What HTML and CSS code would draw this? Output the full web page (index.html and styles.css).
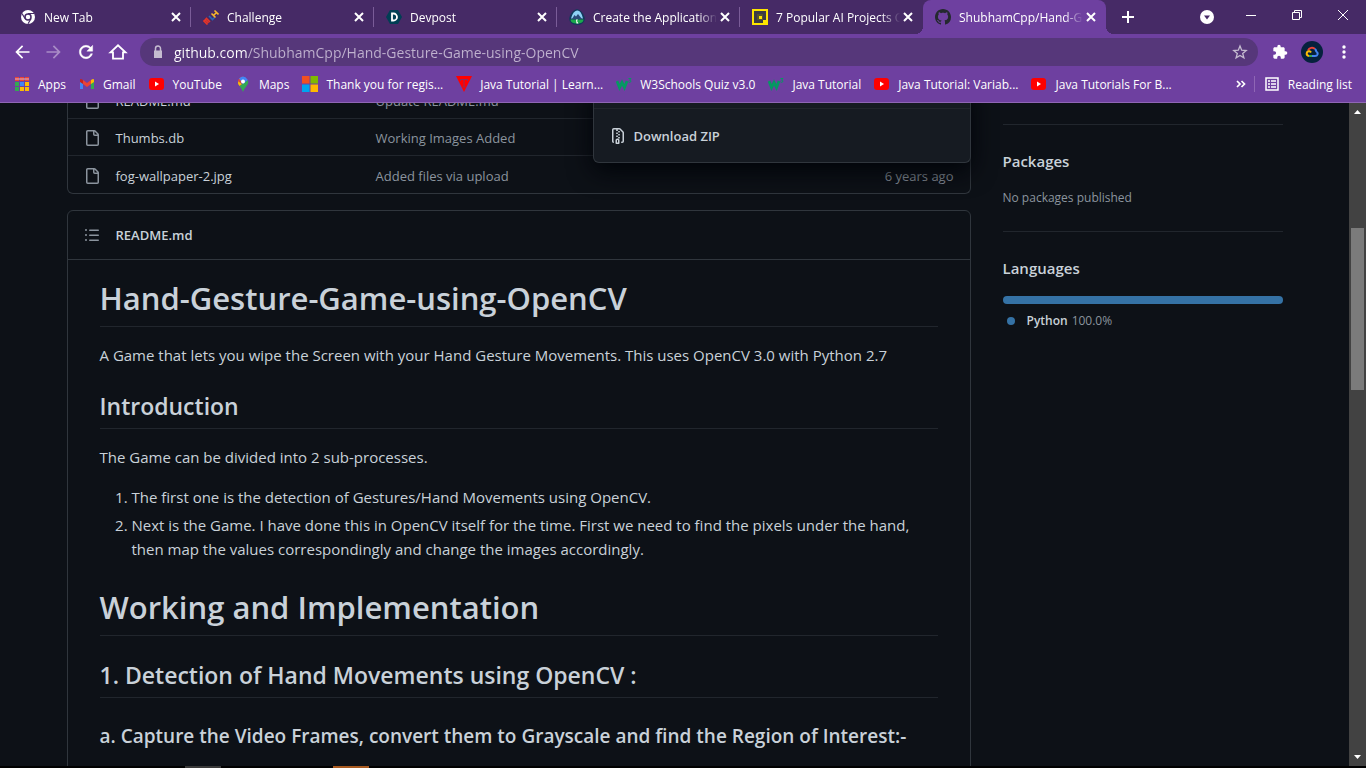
FILE: index.html
```html
<!DOCTYPE html>
<html lang="en">
<head>
  <meta charset="UTF-8">
  <meta name="viewport" content="width=device-width, initial-scale=1.0">
  <title>ShubhamCpp/Hand-Gesture-Game-using-OpenCV</title>
  <link rel="stylesheet" href="styles.css">
</head>
<body>
  <svg class="defs" width="0" height="0">
    <symbol id="close" viewBox="0 0 16 16"><path d="M4 4l8 8M12 4l-8 8" stroke="#fff" stroke-width="2" fill="none"/></symbol>
    <symbol id="youtube" viewBox="0 0 16 16"><rect x="0" y="2" width="15" height="12" rx="3" fill="#f00"/><path d="M6 5.500v5l4-2.500z" fill="#fff"/></symbol>
    <symbol id="w3" viewBox="0 0 16 16"><path d="M1 5l2.500 6.500L6 6.500l2.500 5L11 5" stroke="#059862" stroke-width="2.800" fill="none"/><path d="M12.500 2.500h2.500l-1.500 1.700q2 .3 1.300 1.600-.8.900-2.300.2" stroke="#059862" fill="none"/></symbol>
    <symbol id="file" viewBox="0 0 16 16"><path fill="currentColor" d="M3.750 1.500a.25.25 0 00-.25.25v12.500c0 .138.112.25.25.25h9.500a.25.25 0 00.25-.25V6h-2.750A1.750 1.750 0 019 4.250V1.500H3.750zm6.750.062V4.250c0 .138.112.25.25.25h2.688a.252.252 0 00-.011-.013l-2.914-2.914a.272.272 0 00-.013-.011zM2 1.750C2 .784 2.784 0 3.750 0h6.586c.464 0 .909.184 1.237.513l2.914 2.914c.329.328.513.773.513 1.237v9.586A1.750 1.750 0 0113.250 16h-9.500A1.750 1.750 0 012 14.250V1.750z"/></symbol>
  </svg>

  <div class="browser">
    <header>
      <div class="tab-strip">
        <div class="tab">
          <svg class="icon" viewBox="0 0 16 16"><circle cx="8" cy="8" r="7" fill="#fff"/><circle cx="8" cy="8" r="3" fill="none" stroke="#462a66" stroke-width="1.500"/><path d="M8 4.500h6M5 9.500L2 4.500M11 9.800l-3 5" stroke="#462a66" stroke-width="1.200"/></svg>
          <span class="tab-title">New Tab</span>
          <button class="tab-close" aria-label="Close tab"><svg class="icon"><use href="#close"/></svg></button>
        </div>
        <div class="tab">
          <svg class="icon" viewBox="0 0 16 16"><g fill="none" stroke-width="1.600"><path d="M4.500 15.500L1 12l1.200-1.200 2 2M2.200 10.800l1.300-1.300 3.500 3.500M3.500 12l2 2" stroke="#e73427"/><path d="M6 7l3.500 3.500L11.500 8.500" stroke="#2667b5"/><path d="M8.500 4.500l4 4M11.500 1.500l4 4M10.500 6.500l3-3" stroke="#f8b92a"/></g></svg>
          <span class="tab-title">Challenge</span>
          <button class="tab-close" aria-label="Close tab"><svg class="icon"><use href="#close"/></svg></button>
        </div>
        <div class="tab">
          <svg class="icon" viewBox="0 0 16 16"><path d="M4 1h8l4 7-4 7H4L0 8z" fill="#003e54"/><path d="M6 4.500h1.500a3.500 3.500 0 010 7H6z" fill="none" stroke="#fff" stroke-width="1.800"/></svg>
          <span class="tab-title">Devpost</span>
          <button class="tab-close" aria-label="Close tab"><svg class="icon"><use href="#close"/></svg></button>
        </div>
        <div class="tab">
          <svg class="icon" viewBox="0 0 16 16"><path d="M8 0q5 1 7.500 8 1 4-1.500 6-2 2-6 2t-6-2q-2.500-2-1.500-6Q3 1 8 0z" fill="#12395b"/><path d="M2 9.500Q4 2 8 1.500T14 9.500z" fill="#8ed1f5"/><path d="M3 10l2.500-4 1.500 1.500L9 5l4 5z" fill="#2b4a78"/><path d="M1.500 10.500h13q0 4-6.500 4t-6.500-4z" fill="#1ba94c"/><path d="M7 10.500h2l-1 1.500 1.500 2.500H7.500z" fill="#fff"/></svg>
          <span class="tab-title">Create the Application</span>
          <button class="tab-close" aria-label="Close tab"><svg class="icon"><use href="#close"/></svg></button>
        </div>
        <div class="tab">
          <svg class="icon" viewBox="0 0 16 16"><path d="M0 0h16v16H0z" fill="#fde400"/><path d="M2 2h12v9h-3v3H2z" fill="#3b3b45"/><path d="M5 5h6v6H5z" fill="#57532c"/><path d="M7 7h3v3H7z" fill="#fde400"/></svg>
          <span class="tab-title">7 Popular AI Projects C</span>
          <button class="tab-close" aria-label="Close tab"><svg class="icon"><use href="#close"/></svg></button>
        </div>
        <div class="tab active">
          <svg class="icon" viewBox="0 0 16 16"><path fill="#24292e" d="M8 0C3.580 0 0 3.580 0 8c0 3.540 2.290 6.530 5.470 7.590.4.07.55-.17.55-.38 0-.19-.01-.82-.01-1.490-2.010.37-2.530-.49-2.690-.94-.09-.23-.48-.94-.82-1.130-.28-.15-.68-.52-.01-.53.63-.01 1.080.58 1.230.82.72 1.210 1.870.87 2.330.66.07-.52.28-.87.51-1.070-1.780-.2-3.640-.89-3.640-3.950 0-.87.31-1.590.82-2.150-.08-.2-.36-1.020.08-2.120 0 0 .67-.21 2.200.82.64-.18 1.320-.27 2-.27s1.360.09 2 .27c1.530-1.040 2.200-.82 2.200-.82.44 1.100.16 1.920.08 2.120.51.56.82 1.270.82 2.150 0 3.070-1.870 3.750-3.650 3.950.29.25.54.73.54 1.480 0 1.070-.01 1.930-.01 2.200 0 .21.15.46.55.38A8.010 8.010 0 0016 8c0-4.420-3.580-8-8-8z"/></svg>
          <span class="tab-title">ShubhamCpp/Hand-G</span>
          <button class="tab-close" aria-label="Close tab"><svg class="icon"><use href="#close"/></svg></button>
        </div>
        <button class="new-tab" aria-label="New tab"><svg class="icon" viewBox="0 0 16 16"><path d="M8 2v12M2 8h12" stroke="#fff" stroke-width="2"/></svg></button>
        <button class="tab-search" aria-label="Search tabs"><svg class="icon" viewBox="0 0 16 16"><circle cx="8" cy="8" r="7" fill="#fff"/><path d="M5 6.500h6l-3 4z" fill="#462a66"/></svg></button>
        <div class="window-buttons">
          <button aria-label="Minimize"><svg class="icon" viewBox="0 0 16 16"><path d="M3 8.500h10" stroke="#fff"/></svg></button>
          <button aria-label="Restore"><svg class="icon" viewBox="0 0 16 16"><path d="M3.500 5.500h7v7h-7zM5.500 5.500v-2h7v7h-2" fill="none" stroke="#fff"/></svg></button>
          <button aria-label="Close"><svg class="icon" viewBox="0 0 16 16"><path d="M3 3l10 10M13 3L3 13" stroke="#fff"/></svg></button>
        </div>
      </div>

      <div class="toolbar">
        <button aria-label="Back"><svg class="nav-icon" viewBox="0 0 24 24"><path fill="#fff" d="M21 11H7.830l5.590-5.590L12 4l-8 8 8 8 1.410-1.410L7.830 13H21z"/></svg></button>
        <button aria-label="Forward"><svg class="nav-icon" viewBox="0 0 24 24"><path fill="#a98cc6" d="M3 11h13.170l-5.590-5.590L12 4l8 8-8 8-1.410-1.410L16.170 13H3z"/></svg></button>
        <button aria-label="Reload"><svg class="nav-icon" viewBox="0 0 24 24"><path fill="#fff" stroke="#fff" stroke-width=".5" d="M17.650 6.350C16.200 4.900 14.210 4 12 4c-4.420 0-7.990 3.580-7.990 8s3.570 8 7.990 8c3.730 0 6.840-2.550 7.730-6h-2.080c-.82 2.330-3.040 4-5.650 4-3.310 0-6-2.690-6-6s2.690-6 6-6c1.660 0 3.140.69 4.220 1.780L13 11h7V4l-2.350 2.350z"/></svg></button>
        <button aria-label="Home"><svg class="nav-icon" viewBox="0 0 24 24"><path fill="none" stroke="#fff" stroke-width="2.200" d="M3 12.500L12 4l9 8.500h-3V20H6v-7.500z"/></svg></button>
        <div class="omnibox">
          <svg class="icon" viewBox="0 0 16 16"><path d="M4 6.500h8V14H4z" fill="#c5bcd0"/><path d="M5.500 7V4.500a2.500 2.500 0 015 0V7" fill="none" stroke="#c5bcd0" stroke-width="1.500"/></svg>
          <input type="text" aria-label="Address" value="github.com/ShubhamCpp/Hand-Gesture-Game-using-OpenCV">
          <button class="star" aria-label="Bookmark this page"><svg class="icon" viewBox="0 0 16 16"><path d="M8 2l1.700 4.200 4.500.3-3.500 2.900 1.200 4.400L8 11.400l-3.900 2.400 1.200-4.400-3.500-2.900 4.500-.3z" fill="none" stroke="#c5bcd0" stroke-width="1.300"/></svg></button>
        </div>
        <button aria-label="Extensions"><svg class="puzzle" viewBox="0 0 24 24"><path fill="#fff" d="M20.500 11H19V7c0-1.100-.9-2-2-2h-4V3.500a2.500 2.500 0 00-5 0V5H4c-1.100 0-1.990.9-1.990 2v3.800H3.500a2.700 2.700 0 010 5.400H2V20c0 1.100.9 2 2 2h3.800v-1.500a2.700 2.700 0 015.400 0V22H17c1.100 0 2-.9 2-2v-4h1.500a2.500 2.500 0 000-5z"/></svg></button>
        <button aria-label="Profile"><svg class="avatar" viewBox="0 0 22 22"><circle cx="11" cy="11" r="11" fill="#06213d"/><g fill="none" stroke-width="2"><path d="M7 9.500A4.300 4.300 0 0114 8" stroke="#ea4335"/><path d="M14 8q1.200 1.200 1.300 2.500 1.800 1 1.200 3-.5 1.500-2.500 1.500h-3" stroke="#4285f4"/><path d="M11 15H8" stroke="#34a853"/><path d="M8 15q-2.500-.5-2.300-2.500Q6 10 8.500 10.200q1 .3 1.500 1.300" stroke="#fbbc04"/></g></svg></button>
        <button aria-label="Menu"><svg class="icon" viewBox="0 0 16 16"><g fill="#fff"><circle cx="8" cy="3" r="1.700"/><circle cx="8" cy="8" r="1.700"/><circle cx="8" cy="13" r="1.700"/></g></svg></button>
      </div>

      <nav class="bookmarks">
        <a href="#"><svg class="icon" viewBox="0 0 16 16"><path d="M1 1h4v4H1zM6 1h4v4H6zM11 1h4v4h-4z" fill="#ea4335"/><path d="M1 6h4v4H1z" fill="#34a853"/><path d="M6 6h4v4H6z" fill="#4285f4"/><path d="M11 6h4v4h-4zM6 11h4v4H6zM11 11h4v4h-4z" fill="#fbbc04"/><path d="M1 11h4v4H1z" fill="#34a853"/><path d="M1 3h14" stroke="#d9b7cd"/></svg><span>Apps</span></a>
        <a href="#"><svg class="icon" viewBox="0 0 16 16"><path d="M1 4v9h3V7z" fill="#4285f4"/><path d="M12 7v6h3V4z" fill="#34a853"/><path d="M4 4l4 3 4-3v4l-4 3-4-3z" fill="#ea4335"/><path d="M1 4q0-2 3 0v4L1 6z" fill="#c5221f"/><path d="M15 4q0-2-3 0v4l3-2z" fill="#fbbc04"/></svg><span>Gmail</span></a>
        <a href="#"><svg class="icon"><use href="#youtube"/></svg><span>YouTube</span></a>
        <a href="#"><svg class="icon" viewBox="0 0 16 16"><path d="M8 16q-1-3-3.500-6L12.800 4q1.500 3-1.300 6Q9 13 8 16z" fill="#34a853"/><path d="M4.500 10Q2.500 8 3 5l4 3z" fill="#fbbc04"/><path d="M3 5q1-4 5-4.500L6 7z" fill="#ea4335"/><path d="M4 2.500Q9-2 12.800 4L8 8z" fill="#4285f4"/><circle cx="8" cy="5.500" r="2" fill="#fff"/></svg><span>Maps</span></a>
        <a href="#"><svg class="icon" viewBox="0 0 16 16"><path d="M0 0h7.500v7.500H0z" fill="#f25022"/><path d="M8.500 0H16v7.500H8.500z" fill="#7fba00"/><path d="M0 8.500h7.500V16H0z" fill="#00a4ef"/><path d="M8.500 8.500H16V16H8.500z" fill="#ffb900"/></svg><span>Thank you for regis...</span></a>
        <a href="#"><svg class="icon" viewBox="0 0 16 16"><path d="M0 0h16L8 16z" fill="#f00"/><path d="M4.500 5V3.500h7V5M8 3.500V11M6.500 11h3" stroke="#8c2c5c" fill="none"/></svg><span>Java Tutorial | Learn...</span></a>
        <a href="#"><svg class="icon"><use href="#w3"/></svg><span>W3Schools Quiz v3.0</span></a>
        <a href="#"><svg class="icon"><use href="#w3"/></svg><span>Java Tutorial</span></a>
        <a href="#"><svg class="icon"><use href="#youtube"/></svg><span>Java Tutorial: Variab...</span></a>
        <a href="#"><svg class="icon"><use href="#youtube"/></svg><span>Java Tutorials For B...</span></a>
        <button class="more" aria-label="More bookmarks"><svg class="icon" viewBox="0 0 16 16"><path d="M4 5l3 3-3 3M8.500 5l3 3-3 3" fill="none" stroke="#fff" stroke-width="1.700"/></svg></button>
        <a class="reading-list" href="#"><svg class="icon" viewBox="0 0 16 16"><path d="M2 2h12v12H2z" fill="none" stroke="#fff" stroke-width="1.500"/><path d="M4 5h2M7 5h5M4 8h2M7 8h5M4 11h2M7 11h5" stroke="#fff" stroke-width="1.500"/></svg><span>Reading list</span></a>
      </nav>
    </header>

    <div class="viewport">
      <div class="page">
        <div class="container">
          <main>
            <table class="files">
              <tr>
                <td class="file-icon"><svg class="icon"><use href="#file"/></svg></td>
                <td class="file-name"><a href="#">README.md</a></td>
                <td class="message"><a href="#">Update README.md</a></td>
                <td class="age"></td>
              </tr>
              <tr>
                <td class="file-icon"><svg class="icon"><use href="#file"/></svg></td>
                <td class="file-name"><a href="#">Thumbs.db</a></td>
                <td class="message"><a href="#">Working Images Added</a></td>
                <td class="age"></td>
              </tr>
              <tr>
                <td class="file-icon"><svg class="icon"><use href="#file"/></svg></td>
                <td class="file-name"><a href="#">fog-wallpaper-2.jpg</a></td>
                <td class="message"><a href="#">Added files via upload</a></td>
                <td class="age">6 years ago</td>
              </tr>
            </table>

            <div class="code-menu">
              <a href="#">
                <svg class="icon" viewBox="0 0 16 16"><path fill="currentColor" d="M3.500 1.750a.25.25 0 01.25-.25h3a.75.75 0 000 1.500h.5a.75.75 0 000-1.500h2.086a.25.25 0 01.177.073l2.914 2.914a.25.25 0 01.073.177v8.586a.25.25 0 01-.25.25h-.5a.75.75 0 000 1.500h.5A1.750 1.750 0 0014 13.250V4.664c0-.464-.184-.909-.513-1.237L10.573.513A1.750 1.750 0 009.336 0H3.750A1.750 1.750 0 002 1.750v11.500c0 .649.353 1.214.874 1.515a.75.75 0 10.752-1.298.25.25 0 01-.126-.217V1.750zM8.750 3a.75.75 0 000 1.500h.5a.75.75 0 000-1.500h-.5zM6 5.250a.75.75 0 01.75-.75h.5a.75.75 0 010 1.500h-.5A.75.75 0 016 5.250zm2 1.500A.75.75 0 018.750 6h.5a.75.75 0 010 1.500h-.5A.75.75 0 018 6.750zm-1.250.75a.75.75 0 000 1.500h.5a.75.75 0 000-1.500h-.5zM8 9.750A.75.75 0 018.750 9h.5a.75.75 0 010 1.500h-.5A.75.75 0 018 9.750zm-.75.75a1.750 1.750 0 00-1.750 1.750v3c0 .414.336.75.75.75h2.500a.75.75 0 00.75-.75v-3a1.750 1.750 0 00-1.750-1.750h-.5zM7 12.250a.25.25 0 01.25-.25h.5a.25.25 0 01.25.25v2.250H7v-2.250z"/></svg>
                Download ZIP
              </a>
            </div>

            <section class="readme">
              <div class="readme-header">
                <svg class="icon" viewBox="0 0 16 16"><path fill="currentColor" d="M2 4a1 1 0 100-2 1 1 0 000 2zm3.750-1.500a.75.75 0 000 1.500h8.500a.75.75 0 000-1.500h-8.500zm0 5a.75.75 0 000 1.500h8.500a.75.75 0 000-1.500h-8.500zm0 5a.75.75 0 000 1.500h8.500a.75.75 0 000-1.500h-8.500zM3 8a1 1 0 11-2 0 1 1 0 012 0zm-1 6a1 1 0 100-2 1 1 0 000 2z"/></svg>
                <a href="#">README.md</a>
              </div>
              <article class="markdown">
                <h1>Hand-Gesture-Game-using-OpenCV</h1>
                <p>A Game that lets you wipe the Screen with your Hand Gesture Movements. This uses OpenCV 3.0 with Python 2.7</p>
                <h2>Introduction</h2>
                <p>The Game can be divided into 2 sub-processes.</p>
                <ol>
                  <li>The first one is the detection of Gestures/Hand Movements using OpenCV.</li>
                  <li>Next is the Game. I have done this in OpenCV itself for the time. First we need to find the pixels under the hand, then map the values correspondingly and change the images accordingly.</li>
                </ol>
                <h1>Working and Implementation</h1>
                <h2>1. Detection of Hand Movements using OpenCV :</h2>
                <h3>a. Capture the Video Frames, convert them to Grayscale and find the Region of Interest:-</h3>
              </article>
            </section>
          </main>

          <aside class="sidebar">
            <section>
              <h4>Packages</h4>
              <p>No packages published</p>
            </section>
            <section>
              <h4>Languages</h4>
              <div class="language-bar"></div>
              <p class="language"><span class="dot"></span><b>Python</b> 100.0%</p>
            </section>
          </aside>
        </div>
      </div>
      <div class="scrollbar">
        <svg viewBox="0 0 17 17"><path d="M5 11h7L8.500 7z" fill="#fff"/></svg>
        <div class="track"><div class="thumb"></div></div>
        <svg viewBox="0 0 17 17"><path d="M5 6h7l-3.500 4z" fill="#fff"/></svg>
      </div>
    </div>
    <div class="taskbar"><span class="open-app"></span><span class="alert-app"></span></div>
  </div>
</body>
</html>
```

FILE: styles.css
```css
* {
  margin: 0;
  padding: 0;
  box-sizing: border-box;
}

body {
  font-family: "Open Sans", "Noto Sans", sans-serif;
  font-size: 13px;
  color: #c9d1d9;
  background: #0d1117;
}

a {
  color: inherit;
  text-decoration: none;
}

button {
  display: flex;
  align-items: center;
  justify-content: center;
  border: 0;
  background: none;
}

svg {
  display: block;
  flex-shrink: 0;
}

.defs {
  position: absolute;
}

.icon {
  width: 16px;
  height: 16px;
}

.nav-icon {
  width: 20px;
  height: 20px;
}

.browser {
  display: flex;
  flex-direction: column;
  height: 100vh;
  overflow: hidden;
}

/* tabs */
.tab-strip {
  display: flex;
  height: 34px;
  padding-left: 8px;
  background: #462a66;
  color: #fff;
  font-size: 12px;
}

.tab {
  display: flex;
  align-items: center;
  flex: 0 1 183px;
  min-width: 0;
  padding: 0 7px 0 12px;
  background: linear-gradient(#7a5c98, #7a5c98) right center / 1px 20px no-repeat;
}

.tab:nth-child(5) {
  background: none;
}

.tab.active {
  position: relative;
  background: #6e40a0;
  border-radius: 8px 8px 0 0;
}

/* rounded feet of the active tab */
.tab.active::before,
.tab.active::after {
  content: "";
  position: absolute;
  bottom: 0;
  width: 8px;
  height: 8px;
}

.tab.active::before {
  left: -8px;
  background: radial-gradient(circle at 0 0, transparent 8px, #6e40a0 8px);
}

.tab.active::after {
  right: -8px;
  background: radial-gradient(circle at 100% 0, transparent 8px, #6e40a0 8px);
}

.tab-title {
  flex: 1;
  min-width: 0;
  margin-left: 8px;
  overflow: hidden;
  white-space: nowrap;
  -webkit-mask-image: linear-gradient(to right, #000 85%, transparent);
  mask-image: linear-gradient(to right, #000 85%, transparent);
}

.new-tab {
  width: 44px;
}

.tab-search {
  width: 42px;
  margin-left: auto;
}

.window-buttons {
  display: flex;
}

.window-buttons button {
  width: 46px;
  height: 29px;
}

/* toolbar */
.toolbar {
  display: flex;
  align-items: center;
  height: 36px;
  padding: 0 6px;
  background: #6e40a0;
}

.toolbar > button {
  width: 32px;
  height: 32px;
}

.omnibox {
  display: flex;
  align-items: center;
  flex: 1;
  gap: 8px;
  height: 28px;
  margin: 0 6px;
  padding: 0 10px;
  border-radius: 14px;
  background: #56377a;
}

.omnibox input {
  flex: 1;
  min-width: 0;
  border: 0;
  outline: 0;
  font: inherit;
  font-size: 14px;
  color: transparent;
  /* host name is brighter than the path */
  background: linear-gradient(to right, #fff 74px, #c0b2cf 74px);
  -webkit-background-clip: text;
  background-clip: text;
}

.puzzle {
  width: 16px;
  height: 16px;
}

.avatar {
  width: 22px;
  height: 22px;
}

/* bookmarks */
.bookmarks {
  display: flex;
  height: 33px;
  padding: 0 14px 4px;
  gap: 13px;
  background: #6e40a0;
  border-bottom: 1px solid #8f66b5;
  color: #fff;
  font-size: 12px;
}

.bookmarks a {
  display: flex;
  align-items: center;
  gap: 8px;
  white-space: nowrap;
}

.more {
  margin-left: auto;
}

.bookmarks .reading-list {
  margin-left: -8px;
  padding-left: 10px;
  background: linear-gradient(#8f66b5, #8f66b5) left center / 1px 16px no-repeat;
}

/* page */
.viewport {
  display: flex;
  flex: 1;
  min-height: 0;
}

.page {
  flex: 1;
  overflow: hidden;
}

.container {
  display: flex;
  gap: 32px;
  max-width: 1280px;
  margin: -22px auto 0;
  padding: 0 32px;
}

main {
  position: relative;
  flex: 1;
  min-width: 0;
}

.files {
  width: 100%;
  table-layout: fixed;
  border: 1px solid #30363d;
  border-top: 0;
  border-radius: 0 0 6px 6px;
  border-spacing: 0;
}

.files td {
  height: 37px;
  padding-top: 2px;
  border-top: 1px solid #21262d;
  color: #8b949e;
}

.files tr:last-child td {
  height: 38px;
}

.files .file-icon {
  width: 48px;
  padding-left: 16px;
}

.files .file-name {
  width: 260px;
  color: #c9d1d9;
}

.files .age {
  width: 120px;
  padding-right: 16px;
  text-align: right;
}

.code-menu {
  position: absolute;
  top: 0;
  right: 0;
  width: 378px;
  padding-top: 27px;
  background: #161b22;
  border: 1px solid #30363d;
  border-top: 0;
  border-radius: 0 0 6px 6px;
  box-shadow: 0 8px 24px #010409;
}

.code-menu a {
  display: flex;
  align-items: center;
  gap: 8px;
  height: 54px;
  padding: 0 16px;
  border-top: 1px solid #21262d;
  font-weight: 600;
}

.readme {
  margin-top: 16px;
  border: 1px solid #30363d;
  border-radius: 6px;
}

.readme-header {
  display: flex;
  align-items: center;
  gap: 16px;
  height: 49px;
  padding: 0 16px;
  border-bottom: 1px solid #30363d;
  font-weight: 600;
}

.readme-header svg {
  color: #8b949e;
}

.markdown {
  padding: 16px 32px 32px;
  font-size: 15px;
  line-height: 24px;
}

.markdown h1,
.markdown h2,
.markdown h3 {
  margin: 24px 0 16px;
  font-weight: 600;
}

.markdown h1:first-child {
  margin-top: 0;
}

.markdown h1 {
  padding: 2px 0 8px;
  border-bottom: 1px solid #21262d;
  font-size: 31px;
  line-height: 40px;
}

.markdown h2 {
  padding-bottom: 7px;
  border-bottom: 1px solid #21262d;
  font-size: 23px;
  line-height: 30px;
}

.markdown h3 {
  font-size: 19px;
  line-height: 28px;
}

.markdown p,
.markdown ol {
  margin-bottom: 16px;
}

.markdown ol {
  padding-left: 32px;
}

.markdown li + li {
  margin-top: 4px;
}

/* sidebar */
.sidebar {
  width: 280px;
  padding-top: 43px;
  font-size: 12px;
  line-height: 18px;
}

.sidebar section {
  padding: 24px 0;
  border-top: 1px solid #21262d;
}

.sidebar h4 {
  margin-bottom: 16px;
  font-size: 15px;
  font-weight: 600;
  line-height: 24px;
}

.sidebar p {
  color: #8b949e;
}

.sidebar b {
  color: #c9d1d9;
  font-weight: 600;
}

.language-bar {
  height: 8px;
  margin-bottom: 8px;
  border-radius: 6px;
  background: #3572a5;
}

.language {
  display: flex;
  align-items: center;
  gap: 4px;
}

.dot {
  width: 8px;
  height: 8px;
  margin: 0 8px 0 4px;
  border-radius: 50%;
  background: #3572a5;
}

.scrollbar {
  display: flex;
  flex-direction: column;
  width: 17px;
  background: #424242;
}

.track {
  flex: 1;
  padding: 108px 2px 0;
}

.thumb {
  height: 162px;
  background: #7b7b7b;
}

.taskbar {
  display: flex;
  gap: 112px;
  height: 2px;
  padding-left: 185px;
  background: #000;
}

.taskbar span {
  width: 36px;
}

.open-app {
  background: #3a3a3a;
}

.alert-app {
  background: #a85a20;
}
```
